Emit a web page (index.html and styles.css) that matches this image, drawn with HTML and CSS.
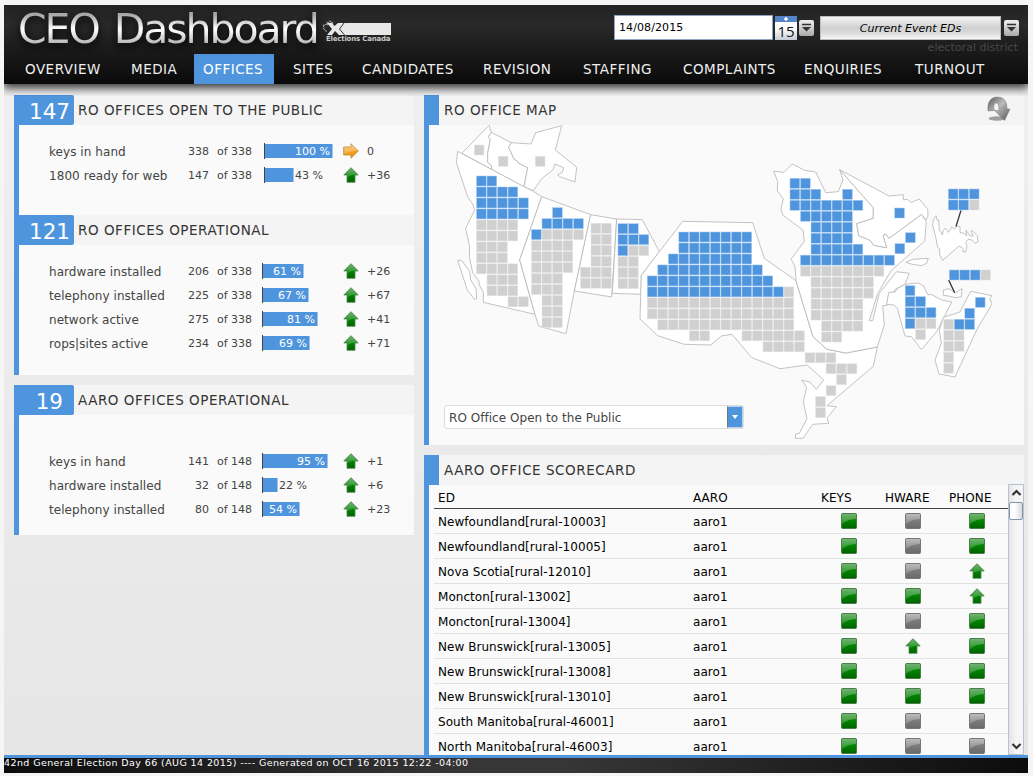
FILE: index.html
```
<!DOCTYPE html>
<html lang="en">
<head>
<meta charset="utf-8">
<title>CEO Dashboard</title>
<link rel="stylesheet" href="styles.css">
</head>
<body>
<svg class="defs" width="0" height="0">
  <defs>
    <linearGradient id="g-green" x1="0" y1="0" x2="0" y2="1"><stop offset="0" stop-color="#0b7a0b"/><stop offset=".5" stop-color="#008400"/><stop offset="1" stop-color="#006200"/></linearGradient>
    <linearGradient id="g-grey" x1="0" y1="0" x2="0" y2="1"><stop offset="0" stop-color="#8a8a8a"/><stop offset="1" stop-color="#6a6a6a"/></linearGradient>
    <linearGradient id="g-orange" x1="0" y1="0" x2="0" y2="1"><stop offset="0" stop-color="#fbb040"/><stop offset="1" stop-color="#f09000"/></linearGradient>
    <linearGradient id="g-gloss" x1="0" y1="0" x2="0" y2="1"><stop offset="0" stop-color="#fff" stop-opacity=".42"/><stop offset="1" stop-color="#fff" stop-opacity=".15"/></linearGradient>
    <linearGradient id="g-metal" x1="0" y1="0" x2="1" y2="1"><stop offset="0" stop-color="#555"/><stop offset=".45" stop-color="#bbb"/><stop offset="1" stop-color="#555"/></linearGradient>
    <symbol id="i-up" viewBox="0 0 16 16"><path d="M8 .7 15.200 8H12v7.300H4V8H.8z" fill="url(#g-green)" stroke="#4b8a4b" stroke-width=".8"/><path d="M8 1.300 14 7.400Q8 7.500 4.400 10V7.600H2z" fill="url(#g-gloss)"/></symbol>
    <symbol id="i-right" viewBox="0 0 16 16"><path d="M15.300 8 8 15.200V12H.7V4H8V.8z" fill="url(#g-orange)" stroke="#b98a3c" stroke-width=".8"/><path d="M14.600 7.500 8.400 1.600V4.500H1.200V11Q7 8 14.600 7.500z" fill="url(#g-gloss)"/></symbol>
    <symbol id="i-green" viewBox="0 0 16 16"><rect x=".5" y=".5" width="15" height="15" rx="1" fill="url(#g-green)" stroke="#3f6f3f" stroke-opacity=".8"/><path d="M1 1h14v5Q6 6.500 1 11z" fill="url(#g-gloss)"/></symbol>
    <symbol id="i-grey" viewBox="0 0 16 16"><rect x=".5" y=".5" width="15" height="15" rx="1" fill="url(#g-grey)" stroke="#777"/><path d="M1 1h14v5Q6 6.500 1 11z" fill="url(#g-gloss)"/></symbol>
    <symbol id="i-drop" viewBox="0 0 15 16"><path d="M3 4.500h9" stroke="#333" stroke-width="1.500"/><path d="M3 7h9l-4.500 4.500z" fill="#333"/></symbol>
  </defs>
</svg>
<div class="app">
  <header class="header">
    <div class="masthead">
      <h1 class="title">CEO Dashboard</h1>
      <div class="logo">
        <svg width="70" height="15" viewBox="0 0 70 15">
          <path d="M4.500 12 3.500 10 1 8.500l1-1L1 5l2 .3L4 4l1.500 1L5 2l1.500.7L8 .7l1.300 2 1.500-.5-.5 2.800" fill="none" stroke="#aaa" stroke-width=".9"/>
          <path d="M5 3h5l2.500 3L16 3h53v12H17l-4-4-3 4H5l5-6z" fill="#e8e8e8"/>
          <path d="M22 3 17.500 9l5 6" fill="none" stroke="#333" stroke-width="1"/>
        </svg>
        <span class="logo-text">Elections Canada</span>
      </div>
      <div class="controls">
        <div class="date">14/08/2015</div>
        <div class="calendar"><i></i><b>15</b></div>
        <svg class="drop" width="15" height="16"><use href="#i-drop"/></svg>
        <div class="event">Current Event EDs</div>
        <svg class="drop drop-end" width="15" height="16"><use href="#i-drop"/></svg>
        <span class="district">electoral district</span>
      </div>
    </div>
    <nav class="nav">
      <a>OVERVIEW</a><a>MEDIA</a><a class="active">OFFICES</a><a>SITES</a><a>CANDIDATES</a><a>REVISION</a><a>STAFFING</a><a>COMPLAINTS</a><a>ENQUIRIES</a><a>TURNOUT</a>
    </nav>
  </header>
  <main class="main">
    <div class="col">
      <section class="panel">
        <h2 class="head"><b class="count">147</b>RO OFFICES OPEN TO THE PUBLIC</h2>
        <div class="stats stats-first" data-rows="keys in hand,338,338,100,0;1800 ready for web,147,338,43,+36"></div>
        <h2 class="head"><b class="count">121</b>RO OFFICES OPERATIONAL</h2>
        <div class="stats stats-ops" data-rows="hardware installed,206,338,61,+26;telephony installed,225,338,67,+67;network active,275,338,81,+41;rops|sites active,234,338,69,+71"></div>
      </section>
      <section class="panel">
        <h2 class="head"><b class="count count-short">19</b>AARO OFFICES OPERATIONAL</h2>
        <div class="stats stats-aaro" data-rows="keys in hand,141,148,95,+1;hardware installed,32,148,22,+6;telephony installed,80,148,54,+23"></div>
      </section>
    </div>
    <div class="col">
      <section class="panel map-panel">
        <h2 class="head head-bar">RO OFFICE MAP
          <svg class="flip" width="26" height="27" viewBox="0 0 26 27"><ellipse cx="12" cy="22.500" rx="8.500" ry="2.200" fill="#777" opacity=".7"/><path d="M3 15C2 6 6 1 12 1c7 0 10 4 10 12h3l-5.500 11.500L9.500 14.500h4.500c0-5-1-7.500-3-7.500-2 0-3 4-1.500 7.500z" fill="url(#g-metal)" stroke="#777" stroke-width=".5"/></svg>
        </h2>
        <svg class="map" width="595" height="320" viewBox="429 125 595 320">
          <g class="land" transform="translate(440 120) scale(.33333)">
            <path d="M53 94 49 128 83 230 98 252 104 270 77 325 89 380 88 410 98 458 117 483 118 495 130 517V547L285 583 239 420 305 230 280 214z"/>
            <path d="M66 100 147 16 154 37 145 50 151 58 143 100V127L155 137V148z"/>
            <path d="M154 37 214 68 206 82 222 117 233 124 236 130 263 143 252 200 155 148V137L143 127V100L151 58 145 50z"/>
            <path d="M214 68 273 72 287 38 365 17 346 90 410 142 405 186 360 170 353 164 367 157 371 143 345 132 339 149 305 176 280 212 252 200 263 143 236 130 233 124 222 117 206 82z"/>
            <path d="M305 230 452 284 403 513 378 641 302 620 296 618 285 583 239 420z"/>
            <path d="M452 284 530 297 515 531 403 513z"/>
            <path d="M530 297 607 299 658 395 604 466 603 523 517 520z"/>
            <path d="M53 421H65L89 455 92 480 108 505 110 537 103 538 82 510z"/>
          </g>
          <g class="land">
            <path d="M682.700 221.300 752.700 222.700 764.300 258.300 796 280.700 813 336.700 827 349.300 846 353 877.300 347 873.300 366.300 827 405.700 836.300 406.700 827 418 828.700 423.300 812.700 424.300 803 438.300H795.300L795.700 434 799.300 433.300 807 418.700 803.300 401.700 806.700 387.300 801.700 380 810 382.300 816.300 389.300 823.700 380 807.300 365 780 368.700 751.700 357.500 732 334.300 721.300 336 710.700 345 684.300 344.300 657.700 335.700 640 319 641.300 275.300z"/>
            <path d="M773.700 171.300 784 172.300 792.300 164 804.700 170.300 815.700 172 825.700 192.700 838.300 191.700 843 180 839.700 169.700 873.300 207.700V218.300L856.700 223.700 858.700 235.700 870 240.300 873.700 245.300 886.700 247.700 883.300 236.700 884 234.300H886L889 238.300 921.700 214.300 926.300 221.700 924.700 241 891 270.700 877.700 293.300 869.300 320.700H872.700L879.300 293.300 896.700 271.700 909.300 273.300 905 284.300 895.300 289.300 894 292.500 889 293 887 305.300 882.700 305.700 884.300 325 877.300 347 846 353 827 349.300 813 336.700 796 280.700 795 266 791 259.300 804.300 241.300 803 230 782.700 215 781 209 783.300 199 777.300 190.700 777.700 181.700z"/>
            <path d="M839.700 169.700 889 196 903.300 194.700V200L907.300 199.300 911 202.500 919.300 199 927.700 209.300 928 216 926 220 921.700 214.300 889 238.300 886 234.300H884L883.300 236.700 886.700 247.700 873.700 245.300 870 240.300 858.700 235.700 856.700 223.700 873.300 218.300V207.700z"/>
          </g>
          <g class="land" transform="translate(880 170) scale(.33333)">
            <path d="M20 403 26 368 47 365 50 357 75 343 115 339 131 348 143 374H155L185 390 215 396 170 485 124 539 95 500 75 498 52 415 42 405z"/>
            <path d="M190 442 240 426 272 364 336 377 329 386 336 402 290 480 225 621 177 612 165 570 184 520 178 480z"/>
            <path d="M190 360 207 356 226 369 246 356 244 380 225 383 206 378 190 376z"/>
            <path d="M78 277 98 268 145 265 140 280 125 287 98 283z"/>
            <path d="M168 137 160 150 158 165 168 205 173 232 178 236 180 256 188 271 236 229 246 232 250 238 248 245 256 246 261 230 257 218 264 208 276 210 285 220 294 215 292 197 280 184 274 182 279 198 270 198 258 180 260 197 252 190 240 188V170L230 168 224 178 216 170 206 187 196 174 190 182 187 194 178 180 176 150 172 152z"/>
            <path class="lead" d="M243 121 228 169M206 330 224 368"/>
          </g>
          <g id="cells"></g>
        </svg>
        <div class="select"><span>RO Office Open to the Public</span><i></i></div>
      </section>
      <section class="panel score-panel">
        <h2 class="head head-bar">AARO OFFICE SCORECARD</h2>
        <div class="score">
          <div class="table" id="table">
            <div class="tr th"><span>ED</span><span>AARO</span><span>KEYS</span><span>HWARE</span><span>PHONE</span></div>
          </div>
          <div class="scroll">
            <svg width="14" height="17" viewBox="0 0 14 17"><path d="M3.500 10 7.500 6l4 4" fill="none" stroke="#333" stroke-width="2.200"/></svg>
            <div class="thumb"></div>
            <svg class="scroll-down" width="14" height="17" viewBox="0 0 14 17"><path d="M3.500 7 7.500 11l4-4" fill="none" stroke="#333" stroke-width="2.200"/></svg>
          </div>
        </div>
      </section>
    </div>
  </main>
  <footer class="footer">42nd General Election Day 66 (AUG 14 2015) ---- Generated on OCT 16 2015 12:22 -04:00</footer>
</div>
<script src="app.js"></script>
</body>
</html>
```
FILE: styles.css
```
body {
  margin: 0;
  padding: 5px 5px 0 4px;
  overflow: hidden;
  background: #f5f5f5;
  font-family: "DejaVu Sans", sans-serif;
  color: #444;
}
* { box-sizing: border-box; }
.defs { position: absolute; }
.app { width: 1024px; height: 768px; display: flex; flex-direction: column; }

.header {
  position: relative;
  flex: none;
  height: 79px;
  background: linear-gradient(#222 0, #2a2a2a 20px, #1d1d1d 40px, #0a0a0a 79px);
  box-shadow: 0 3px 9px 1px rgba(0, 0, 0, .8);
  clip-path: inset(0 0 -12px 0);
}
.masthead { display: flex; height: 49px; padding-left: 14px; }
.title {
  margin: 2px 0 0;
  width: 304px;
  height: 47px;
  font-weight: 400;
  font-size: 41px;
  line-height: 44px;
  letter-spacing: -2.050px;
  word-spacing: 4px;
  white-space: nowrap;
  color: transparent;
  background: linear-gradient(#a8a8a8 8px, #fff 22px, #eee 26px, #999 42px);
  background-clip: text;
  -webkit-background-clip: text;
  filter: drop-shadow(0 4px 5px #000);
}
.logo { width: 70px; padding-top: 16px; display: flex; flex-direction: column; }
.logo svg { display: block; margin-top: -1px; }
.logo-text {
  margin: 0 0 0 4px;
  font: bold 7px/8px "DejaVu Sans", sans-serif;
  letter-spacing: -.2px;
  white-space: nowrap;
  color: #c8c8c8;
}
.controls {
  margin-left: 222px;
  padding-top: 10px;
  display: grid;
  grid-template-columns: 159px 22px 15px 181px 15px;
  grid-template-rows: 25px 16px;
  align-content: start;
  column-gap: 2px;
  align-items: center;
}
.date {
  height: 25px;
  padding-left: 4px;
  border: 1px solid #8fa5bd;
  background: #fff;
  color: #000;
  font-size: 11px;
  letter-spacing: .1px;
  line-height: 23px;
}
.calendar { height: 24px; margin-top: 1px; background: linear-gradient(#fff 50%, #c5ccd4); text-align: center; }
.calendar i {
  display: block;
  height: 6px;
  background: radial-gradient(circle 2px at 11px 3px, #fff 70%, transparent), #5585c8;
}
.calendar b { display: block; font: 500 15px/18px "Open Sans", sans-serif; color: #111; }
.drop { border-radius: 2px; background: linear-gradient(#eee, #aaa); margin-top: 1px; }
.event {
  height: 24px;
  margin: 0 0 0 4px;
  border: 1px solid #bbb;
  background: linear-gradient(#f4f4f4, #cfcfcf 50%, #ddd 75%, #f8f8f8);
  color: #000;
  text-align: center;
  font: italic 11px/24px "DejaVu Sans", sans-serif;
}
.controls .event { width: 181px; }
.drop-end { margin-left: 5px; }
.district {
  grid-column: 1 / -1;
  justify-self: end;
  margin-right: -4px;
  font-size: 11px;
  line-height: 14px;
  letter-spacing: .05px;
  color: #484848;
}
.nav {
  display: grid;
  grid-template-columns: 106px 72px 90px 69px 121px 100px 100px 121px 111px auto;
  justify-items: start;
  padding-left: 12px;
}
.nav a { height: 30px; padding: 0 9px; font-size: 13.500px; line-height: 31px; letter-spacing: .5px; color: #f0f0f0; }
.nav .active { width: 80px; background: #4f95dd; color: #fff; }

.main {
  flex: 1;
  min-height: 0;
  display: grid;
  grid-template-columns: 400px 600px;
  column-gap: 10px;
  padding: 11px 0 0 10px;
  background: linear-gradient(#efefef, #e6e6e6);
}
.col { display: flex; flex-direction: column; gap: 10px; min-height: 0; }
.panel { border-left: 5px solid #4f95dd; background: #fafafa; }
.head {
  display: flex;
  margin: 0;
  height: 30px;
  background: #f4f4f4;
  color: #333;
  font-size: 13.500px;
  font-weight: 400;
  line-height: 30px;
  letter-spacing: .54px;
}
.count {
  width: 60px;
  margin: 0 4px 0 -5px;
  padding-right: 4px;
  border-radius: 0 2px 2px 0;
  background: #4f95dd;
  color: #fff;
  font-size: 21.500px;
  font-weight: 400;
  line-height: 33px;
  letter-spacing: 0;
  text-align: right;
}
.count-short { padding-right: 11px; }
.head-bar { border-left: 10px solid #4f95dd; padding-left: 5px; justify-content: space-between; }
.stats-first { height: 90px; padding-top: 14px; }
.stats-ops { height: 130px; padding-top: 14px; }
.stats-aaro { height: 120px; padding-top: 34px; }
.stat {
  display: grid;
  grid-template-columns: 136px 24px 43px 10px 81px 24px auto;
  padding-left: 30px;
  height: 24px;
  align-items: center;
  font-size: 11px;
  color: #444;
}
.stat-label { padding-top: 1px; font-size: 12px; letter-spacing: .06px; white-space: nowrap; }
.num { text-align: right; }
.of { padding-left: 8px; white-space: nowrap; }
.bar { grid-column: 5; display: flex; align-items: center; height: 16px; border-left: 1px solid #444; }
.stats-first .bar { margin-left: 2px; }
.fill { flex: none; height: 14px; background: #4f95dd; color: #fff; line-height: 15px; text-align: right; padding-right: 2px; white-space: nowrap; border-right: 1px solid #9cc4ee; }
.outside { padding-left: 1px; white-space: nowrap; }
.stat svg { grid-column: 6; display: block; }

.map-panel { height: 350px; display: flex; flex-direction: column; }
.flip { margin: 1px 13px 0 0; }
.map { display: block; flex: none; height: 320px; }
.land path { fill: #fff; stroke: #b8b8b8; stroke-opacity: .85; stroke-width: 1; stroke-linejoin: round; }
.land[transform] path { stroke-width: 3; }
.land path.lead { stroke: #111; stroke-width: 4; fill: none; }
.cell-b { fill: #4f95dd; stroke: #a9cbef; stroke-width: .5; }
.cell-g { fill: #d0d0d0; stroke: #e4e4e4; stroke-width: .5; }
.select {
  position: relative;
  margin: -40px 0 0 15px;
  width: 300px;
  height: 24px;
  display: flex;
  justify-content: space-between;
  padding-left: 4px;
  border: 1px solid #ddd;
  border-radius: 3px;
  background: #fff;
  font-size: 12px;
  letter-spacing: .04px;
  line-height: 24px;
}
.select i {
  width: 16px;
  border: 1px solid #b9d4f2;
  border-left-color: #777;
  background: #4f95dd;
  display: grid;
  place-items: center;
}
.select i::after { content: ""; border: 3.500px solid transparent; border-top: 4px solid #fff; border-bottom: 0; }

.score-panel { height: 300px; display: flex; flex-direction: column; }
.score { flex: 1; min-height: 0; display: flex; }
.table { width: 574px; margin-left: 5px; overflow: hidden; }
.tr {
  display: grid;
  grid-template-columns: 255px 128px 64px 64px 60px;
  padding-left: 4px;
  height: 25px;
  align-items: center;
  border-bottom: 1px solid #e2e2e2;
  font-size: 12px;
  letter-spacing: .05px;
  color: #000;
}
.tr span { padding-top: 2px; line-height: 22px; }
.tr.th { height: 24px; border-bottom: 1px solid #444; }
.tr svg { display: block; margin-left: 20px; }
.scroll {
  width: 16px;
  margin-top: -1px;
  display: flex;
  flex-direction: column;
  border: 1px solid #b9c2cc;
  background: linear-gradient(90deg, #e4e4e4, #f5f5f5 50%);
}
.thumb { height: 18px; border: 1px solid #8296aa; border-radius: 2px; background: linear-gradient(90deg, #fff 40%, #d5d9df); }
.scroll-down { margin-top: auto; }

.footer {
  flex: none;
  height: 18px;
  border-top: 3px solid #4f95dd;
  background: linear-gradient(90deg, #0c0c0c, #363636 45%, #363636 55%, #0c0c0c);
  color: #fff;
  font-size: 9.500px;
  letter-spacing: .4px;
  line-height: 10px;
  white-space: nowrap;
}
```
FILE: app.js
```
// Seats per region: origin, then rows of b (open) and g (not yet open).
const regions = [
  [474.300, 145, 'g'], [498.300, 156.300, 'g'], [535.300, 156.300, 'g'],
  [476.500, 176, 'bb|bbbb|bbbbb|bbbbb|gggg|gggg|ggg|ggg|gggg|.ggg|.ggg|...gg'],
  [531.500, 207.700, '..b|.bbbb|bgggg|gggg|gggg|gggg|ggg|ggg|.gg|.gg|.gg'],
  [580.500, 223.300, '.gg|.gg|.gg|.gg|ggg|ggg'],
  [618, 223.700, 'bb|bbb|bgg|gg|gg|gg'],
  [647.300, 232, '...bbbbbbb|...bbbbbbb|..bbbbbbbb|.bbbbbbbbbb|bbbbbbbbbbbb|bbbbbbbbbbbbbg|gggggggggggggg|gggggggggggggg|.ggggggggggggg|....gg...gggggg|...........gggg|...............ggg|.................ggg|..................g|.................g|................g|................g'],
  [790, 178.300, 'bb|bbb..b|bbbbbbb|.bbbbb|..bbbb|..bbbb|..bbbbb|.bbbbbbbbb|.gggggggg|..gggggg|..gggggg|..ggggg|..ggggg|...gggg|...gg'],
  [894.700, 208, 'b'], [905.500, 232.700, 'b'], [895, 243.700, 'b'],
  [905.200, 285.700, 'b|bb|bbb|bgg|.g'],
  [943.800, 297.300, '...b|..b|gbb|gg|gg|g|g'],
  [948.300, 189, 'bbb|bbg'],
  [949.300, 270, 'bbbg']
];
let cells = '';
for (const [x0, y0, rows] of regions) {
  rows.split('|').forEach((row, r) => {
    [...row].forEach((c, i) => {
      if (c !== '.') cells += `<rect class="cell-${c}" x="${x0 + i * 10.52}" y="${y0 + r * 10.98}" width="9.700" height="10"/>`;
    });
  });
}
document.getElementById('cells').innerHTML = cells;

document.querySelectorAll('.stats').forEach(box => {
  box.innerHTML = box.dataset.rows.split(';').map(line => {
    const [label, n, total, pct, delta] = line.split(',');
    const inside = pct >= 50;
    return `<div class="stat"><span class="stat-label">${label}</span><span class="num">${n}</span><span class="of">of ${total}</span>` +
      `<div class="bar"><div class="fill" style="width:${Math.round(pct * 0.68)}px">${inside ? pct + ' %' : ''}</div>${inside ? '' : `<span class="outside">${pct} %</span>`}</div>` +
      `<svg width="16" height="16"><use href="#i-${delta === '0' ? 'right' : 'up'}"/></svg><span>${delta}</span></div>`;
  }).join('');
});

const offices = [
  ['Newfoundland[rural-10003]', 'green', 'grey', 'green'],
  ['Newfoundland[rural-10005]', 'green', 'grey', 'green'],
  ['Nova Scotia[rural-12010]', 'green', 'grey', 'up'],
  ['Moncton[rural-13002]', 'green', 'green', 'up'],
  ['Moncton[rural-13004]', 'green', 'grey', 'green'],
  ['New Brunswick[rural-13005]', 'green', 'up', 'green'],
  ['New Brunswick[rural-13008]', 'green', 'green', 'green'],
  ['New Brunswick[rural-13010]', 'green', 'green', 'green'],
  ['South Manitoba[rural-46001]', 'green', 'grey', 'grey'],
  ['North Manitoba[rural-46003]', 'green', 'grey', 'grey']
];
document.getElementById('table').insertAdjacentHTML('beforeend', offices.map(([name, ...marks]) =>
  `<div class="tr"><span>${name}</span><span>aaro1</span>${marks.map(m => `<svg width="16" height="16"><use href="#i-${m}"/></svg>`).join('')}</div>`
).join(''));
```
